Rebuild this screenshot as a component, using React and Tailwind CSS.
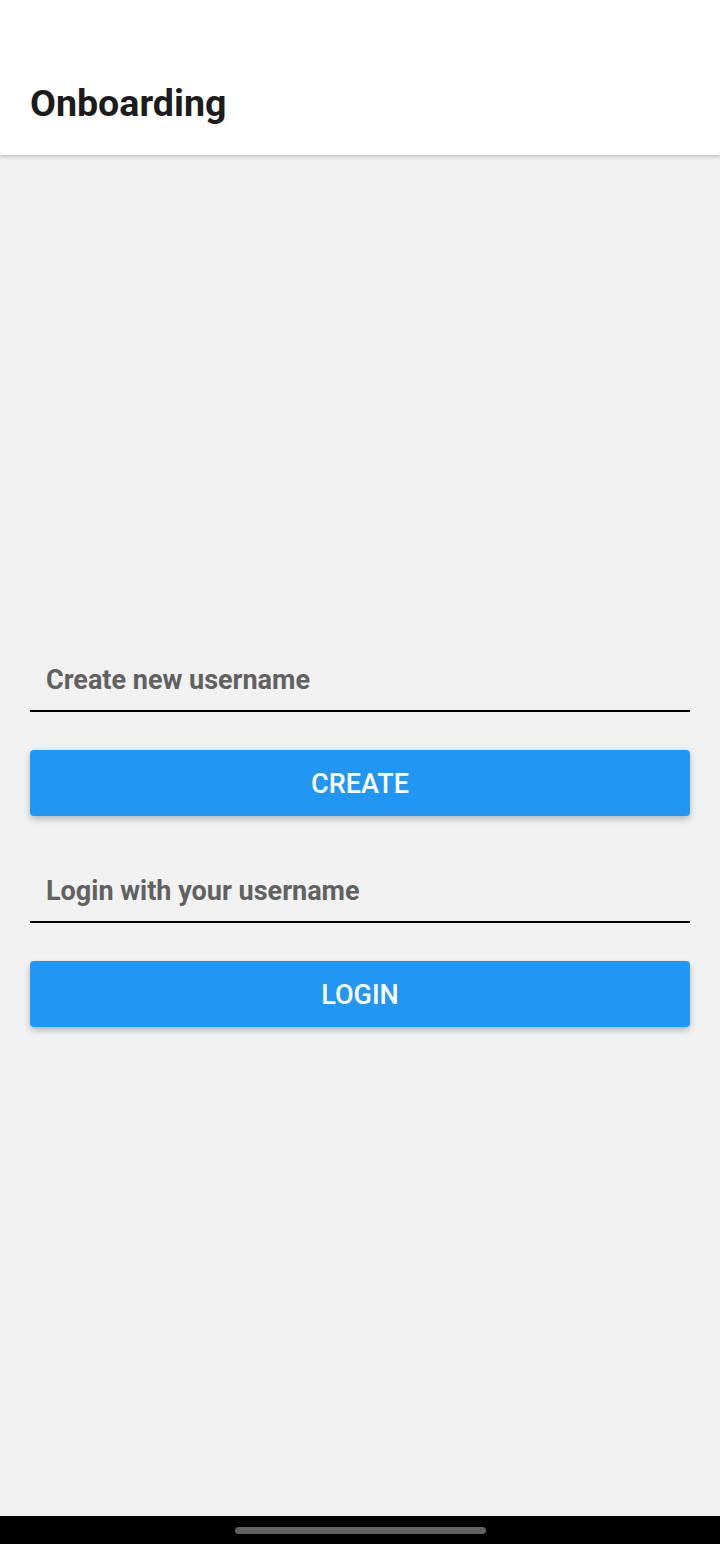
export default function App() {
  return (
    <div className="flex h-[1544px] w-[720px] flex-col bg-[#f1f1f1]" style={{ fontFamily: 'Roboto, "Liberation Sans", sans-serif' }}>
      <header className="relative z-10 flex h-[155px] shrink-0 items-end bg-white px-[30px] pb-[32px] shadow-[0_2px_4px_rgba(0,0,0,0.18)]">
        <h1 className="text-[37.6px] font-bold leading-none text-[#1c1c1c]">Onboarding</h1>
      </header>
      <main className="flex flex-1 flex-col px-[30px] pt-[495px]">
        <div className="flex h-[62px] items-center border-b-2 border-black pl-[16px]">
          <span className="text-[27px] font-bold text-[#616161]">Create new username</span>
        </div>
        <button className="mt-[38px] flex h-[66px] items-center justify-center rounded-[4px] bg-[#2196f3] pt-[2px] text-[27px] font-medium text-white shadow-[0_3px_6px_rgba(0,0,0,0.25)]">
          CREATE
        </button>
        <div className="mt-[45px] flex h-[62px] items-center border-b-2 border-black pl-[16px]">
          <span className="text-[27px] font-bold text-[#616161]">Login with your username</span>
        </div>
        <button className="mt-[38px] flex h-[66px] items-center justify-center rounded-[4px] bg-[#2196f3] pt-[2px] text-[27px] font-medium text-white shadow-[0_3px_6px_rgba(0,0,0,0.25)]">
          LOGIN
        </button>
      </main>
      <div className="flex h-[28px] shrink-0 items-center justify-center bg-black">
        <div className="h-[7px] w-[251px] rounded-full bg-[#616161]" />
      </div>
    </div>
  );
}
